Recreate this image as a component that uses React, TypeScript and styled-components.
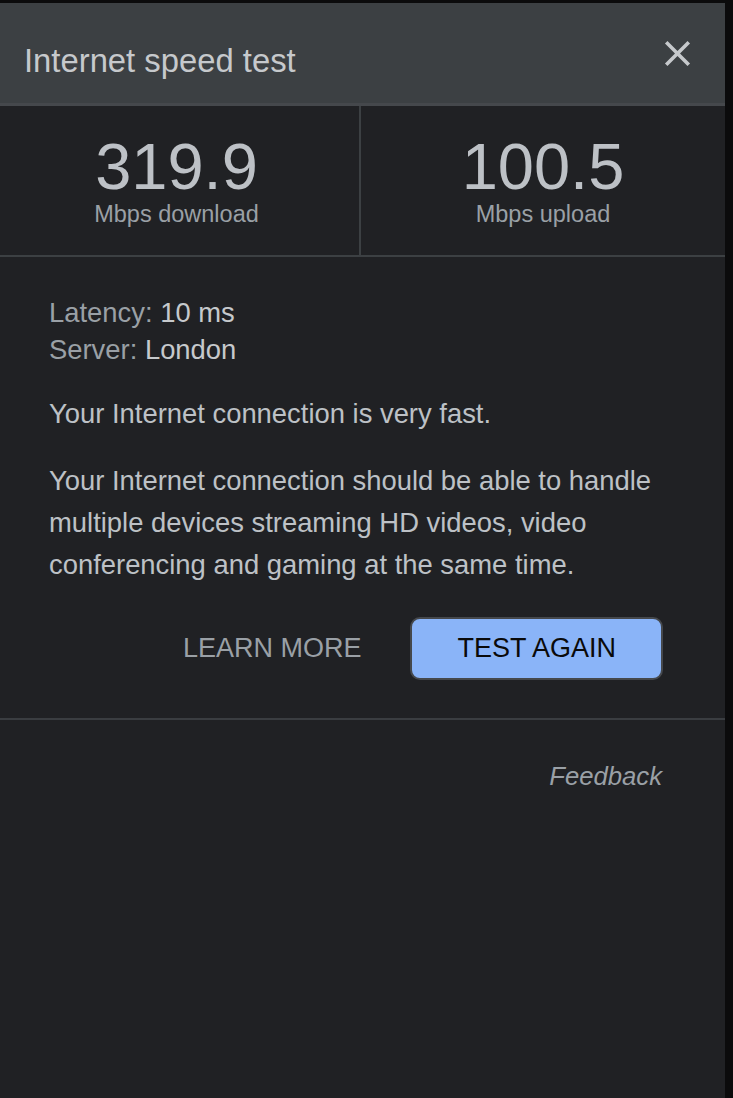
import styled, { createGlobalStyle } from 'styled-components';

const GlobalStyle = createGlobalStyle`
  html, body {
    margin: 0;
    padding: 0;
    background: #0b0b0c;
  }

  body {
    font-family: 'Liberation Sans', Arial, sans-serif;
  }

  * {
    box-sizing: border-box;
  }
`;

const Page = styled.div`
  min-height: 1098px;
  padding: 3px 8px 0 0;
  background: #0b0b0c;
`;

const Panel = styled.section`
  width: 725px;
  min-height: 1095px;
  background: #202124;
  display: flex;
  flex-direction: column;
`;

const Header = styled.header`
  height: 103px;
  display: flex;
  flex-flow: row nowrap;
  justify-content: space-between;
  align-items: center;
  padding: 0 24px;
  background: #3c4043;
  border-bottom: 3px solid #45484c;
`;

const Title = styled.h2`
  margin: 0;
  padding-top: 16px;
  font-weight: 400;
  font-size: 32.8px;
  line-height: 36px;
  color: #c6c9cc;
`;

const CloseBtn = styled.button`
  width: 48px;
  height: 48px;
  padding: 0;
  border: 0;
  background: transparent;
  cursor: pointer;
  display: flex;
  justify-content: center;
  align-items: center;
  color: #c6c9cc;
`;

const Speeds = styled.div`
  display: grid;
  grid-template-columns: 361px 1fr;
  border-bottom: 2px solid #3c4043;
`;

const SpeedCell = styled.div<{ $divider?: boolean }>`
  display: flex;
  flex-direction: column;
  align-items: center;
  padding: 29px ${(p) => (p.$divider ? '6px' : '0')} 28px 0;
  border-right: ${(p) => (p.$divider ? '2px solid #3c4043' : '0')};
`;

const SpeedValue = styled.div`
  font-size: 65px;
  line-height: 64px;
  color: #bdc1c6;
`;

const SpeedLabel = styled.div`
  margin-top: 2px;
  font-size: 23.5px;
  line-height: 26px;
  color: #9aa0a6;
`;

const Details = styled.div`
  padding: 37px 62px 38px 49px;
  border-bottom: 2px solid #3a3d41;
`;

const InfoList = styled.div`
  font-size: 27.4px;
  line-height: 37px;
`;

const InfoLine = styled.div`
  color: #9aa0a6;

  & > span {
    color: #c6c9cc;
  }
`;

const Paragraph = styled.p`
  margin: 25px 0 0;
  font-size: 27.4px;
  line-height: 42px;
  color: #bdc1c6;
`;

const Actions = styled.div`
  display: flex;
  flex-flow: row nowrap;
  justify-content: flex-end;
  align-items: center;
  gap: 23px;
  margin-top: 31px;
`;

const ActionBtn = styled.button<{ $filled?: boolean }>`
  height: 63px;
  padding: 0 ${(p) => (p.$filled ? '45px' : '24px')};
  border-radius: 10px;
  border: 2px solid ${(p) => (p.$filled ? '#45484c' : 'transparent')};
  background: ${(p) => (p.$filled ? '#8ab4f8' : 'transparent')};
  color: ${(p) => (p.$filled ? '#0a0a0a' : '#9aa0a6')};
  font-family: inherit;
  font-size: 27px;
  text-transform: uppercase;
  cursor: pointer;
`;

const FeedbackRow = styled.div`
  display: flex;
  justify-content: flex-end;
  padding: 41px 63px 0 0;
`;

const FeedbackLink = styled.a`
  font-style: italic;
  font-size: 25.7px;
  line-height: 30px;
  color: #9aa0a6;
  text-decoration: none;
  cursor: pointer;
`;

function CloseIcon() {
  return (
    <svg width="43" height="43" viewBox="0 0 24 24" fill="currentColor">
      <path d="M19 6.41L17.59 5 12 10.59 6.41 5 5 6.41 10.59 12 5 17.59 6.41 19 12 13.41 17.59 19 19 17.59 13.41 12z" />
    </svg>
  );
}

export default function App() {
  return (
    <>
      <GlobalStyle />
      <Page>
        <Panel>
          <Header>
            <Title>Internet speed test</Title>
            <CloseBtn aria-label="Close">
              <CloseIcon />
            </CloseBtn>
          </Header>

          <Speeds>
            <SpeedCell $divider>
              <SpeedValue>319.9</SpeedValue>
              <SpeedLabel>Mbps download</SpeedLabel>
            </SpeedCell>
            <SpeedCell>
              <SpeedValue>100.5</SpeedValue>
              <SpeedLabel>Mbps upload</SpeedLabel>
            </SpeedCell>
          </Speeds>

          <Details>
            <InfoList>
              <InfoLine>
                Latency: <span>10 ms</span>
              </InfoLine>
              <InfoLine>
                Server: <span>London</span>
              </InfoLine>
            </InfoList>
            <Paragraph>Your Internet connection is very fast.</Paragraph>
            <Paragraph>
              Your Internet connection should be able to handle multiple
              devices streaming HD videos, video conferencing and gaming at the
              same time.
            </Paragraph>
            <Actions>
              <ActionBtn>Learn more</ActionBtn>
              <ActionBtn $filled>Test again</ActionBtn>
            </Actions>
          </Details>

          <FeedbackRow>
            <FeedbackLink>Feedback</FeedbackLink>
          </FeedbackRow>
        </Panel>
      </Page>
    </>
  );
}
